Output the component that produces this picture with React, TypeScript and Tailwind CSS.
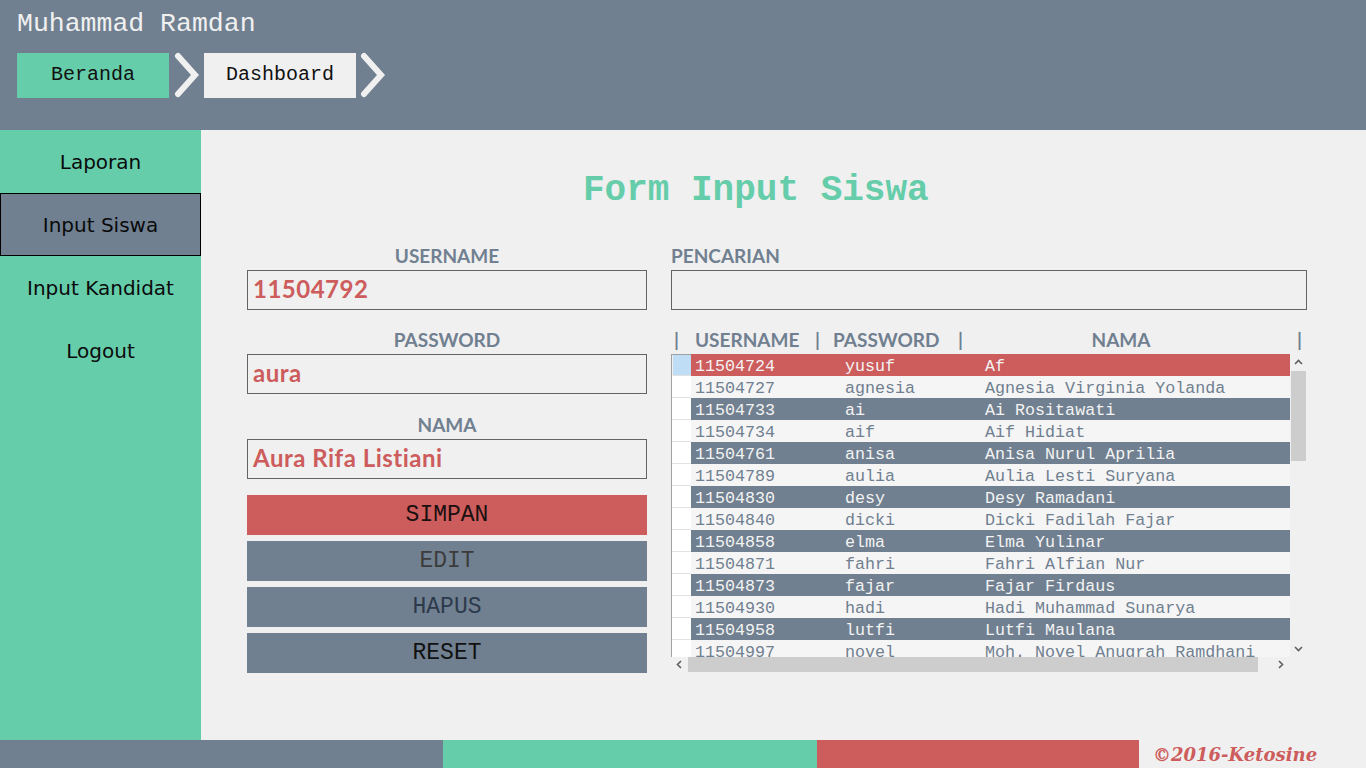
import React from "react";

const rows: [string, string, string][] = [
  ["11504724", "yusuf", "Af"],
  ["11504727", "agnesia", "Agnesia Virginia Yolanda"],
  ["11504733", "ai", "Ai Rositawati"],
  ["11504734", "aif", "Aif Hidiat"],
  ["11504761", "anisa", "Anisa Nurul Aprilia"],
  ["11504789", "aulia", "Aulia Lesti Suryana"],
  ["11504830", "desy", "Desy Ramadani"],
  ["11504840", "dicki", "Dicki Fadilah Fajar"],
  ["11504858", "elma", "Elma Yulinar"],
  ["11504871", "fahri", "Fahri Alfian Nur"],
  ["11504873", "fajar", "Fajar Firdaus"],
  ["11504930", "hadi", "Hadi Muhammad Sunarya"],
  ["11504958", "lutfi", "Lutfi Maulana"],
  ["11504997", "novel", "Moh. Novel Anugrah Ramdhani"],
];

const mono = "font-['Liberation_Mono','Courier_New',monospace]";
const lato = "font-['Lato','Noto_Sans',sans-serif]";

function Chevron() {
  return (
    <svg width="30" height="46" viewBox="0 0 30 46" className="shrink-0">
      <polyline
        points="6,4 23,23 6,42"
        fill="none"
        stroke="#f0f0f0"
        strokeWidth="6"
        strokeLinejoin="miter"
        strokeLinecap="round"
      />
    </svg>
  );
}

function SmallArrow({ dir }: { dir: "up" | "down" | "left" | "right" }) {
  const pts =
    dir === "up"
      ? "1,6 4.5,2.5 8,6"
      : dir === "down"
      ? "1,3 4.5,6.5 8,3"
      : dir === "left"
      ? "6,1 2.5,4.5 6,8"
      : "3,1 6.5,4.5 3,8";
  return (
    <svg width="9" height="9" viewBox="0 0 9 9">
      <polyline points={pts} fill="none" stroke="#606060" strokeWidth="1.6" />
    </svg>
  );
}

function Field({ label, value, mt }: { label: string; value: string; mt: string }) {
  return (
    <div className={`flex flex-col ${mt}`}>
      <div className={`h-[26px] text-center ${lato} font-bold text-[19px] leading-[24px] text-[#708090]`}>
        {label}
      </div>
      <div className="h-[40px] border border-[#646464] flex items-center pl-[5px] pb-[2px]">
        <span className={`${lato} font-bold text-[24px] leading-none tracking-[0.5px] text-[#CD5C5C]`}>{value}</span>
      </div>
    </div>
  );
}

export default function App() {
  return (
    <div className="w-[1366px] h-[768px] flex flex-col bg-[#F0F0F0] overflow-hidden">
      {/* header */}
      <div className="h-[130px] bg-[#708090] px-[17px] pt-[10px] flex flex-col">
        <div className={`${mono} text-[26.5px] leading-[28px] text-[#f0f0f0]`}>Muhammad Ramdan</div>
        <div className="mt-[14px] flex items-center">
          <div className={`w-[152px] h-[45px] bg-[#66CDAA] flex items-center justify-center ${mono} text-[20px] text-[#111]`}>
            Beranda
          </div>
          <div className="w-[35px] flex justify-center">
            <Chevron />
          </div>
          <div className={`w-[152px] h-[45px] bg-[#F0F0F0] flex items-center justify-center ${mono} text-[20px] text-[#111]`}>
            Dashboard
          </div>
          <div className="w-[34px] flex justify-center">
            <Chevron />
          </div>
        </div>
      </div>

      {/* middle */}
      <div className="h-[610px] flex">
        <div className="w-[201px] bg-[#66CDAA] flex flex-col font-['DejaVu_Sans',sans-serif] font-normal text-[20px] text-[#0a0a0a]">
          <div className="h-[63px] flex items-center justify-center">Laporan</div>
          <div className="h-[63px] flex items-center justify-center bg-[#708090] border border-black">Input Siswa</div>
          <div className="h-[63px] flex items-center justify-center">Input Kandidat</div>
          <div className="h-[63px] flex items-center justify-center">Logout</div>
        </div>

        <div className="flex-1 flex flex-col pt-[41px]">
          <div className={`pl-[382px] h-[40px] ${mono} font-bold text-[36px] leading-[40px] text-[#66CDAA]`}>
            Form Input Siswa
          </div>
          <div className="mt-[33px] pl-[46px] flex gap-[24px]">
            {/* left column */}
            <div className="w-[400px] flex flex-col">
              <Field label="USERNAME" value="11504792" mt="" />
              <Field label="PASSWORD" value="aura" mt="mt-[18px]" />
              <Field label="NAMA" value="Aura Rifa Listiani" mt="mt-[19px]" />
              <div className={`mt-[16px] flex flex-col gap-[6px] ${mono} text-[23px]`}>
                <div className="h-[40px] bg-[#CD5C5C] flex items-center justify-center text-[#1a1010]">SIMPAN</div>
                <div className="h-[40px] bg-[#708090] flex items-center justify-center text-[#3c3c3c]">EDIT</div>
                <div className="h-[40px] bg-[#708090] flex items-center justify-center text-[#2c3a4c]">HAPUS</div>
                <div className="h-[40px] bg-[#708090] flex items-center justify-center text-[#111]">RESET</div>
              </div>
            </div>

            {/* right column */}
            <div className="w-[636px] flex flex-col">
              <div className={`h-[26px] ${lato} font-bold text-[19px] leading-[24px] text-[#708090]`}>PENCARIAN</div>
              <div className="h-[40px] border border-[#646464]" />
              <div className={`mt-[18px] h-[26px] flex ${lato} font-bold text-[19px] leading-[24px] text-[#708090]`}>
                <div className="w-[20px] pl-[3px]">|</div>
                <div className="w-[124px] pl-[4px]">USERNAME</div>
                <div className="w-[18px]">|</div>
                <div className="w-[125px]">PASSWORD</div>
                <div className="w-[8px]">|</div>
                <div className="w-[331px] pr-[21px] text-center">NAMA</div>
                <div>|</div>
              </div>

              {/* grid */}
              <div className="flex flex-col h-[318px]">
                <div className="flex h-[303px]">
                  <div className="w-[619px] h-[303px] overflow-hidden flex border-l border-[#A0A0A0]">
                    <div className="w-[19px] flex flex-col border-t border-[#A0A0A0]">
                      {rows.map((_, i) => (
                        <div
                          key={i}
                          className={`${i === 0 ? "h-[21px] bg-[#BFDDF5] ml-px" : "h-[22px] bg-white"} shrink-0 border-b border-[#E2E2E2]`}
                        />
                      ))}
                    </div>
                    <div className={`flex-1 flex flex-col ${mono} text-[16.7px] leading-[25px]`}>
                      {rows.map((r, i) => {
                        const cls =
                          i === 0
                            ? "bg-[#CD5C5C] text-[#f3f3f3]"
                            : i % 2 === 1
                            ? "bg-[#F5F5F5] text-[#708090]"
                            : "bg-[#708090] text-[#f3f3f3]";
                        return (
                          <div key={i} className={`h-[22px] shrink-0 flex whitespace-nowrap overflow-hidden ${cls}`}>
                            <div className="w-[150px] pl-[4px]">{r[0]}</div>
                            <div className="w-[140px] pl-[4px]">{r[1]}</div>
                            <div className="flex-1 pl-[4px]">{r[2]}</div>
                          </div>
                        );
                      })}
                    </div>
                  </div>
                  <div className="w-[17px] flex flex-col items-center">
                    <div className="h-[17px] flex items-center justify-center">
                      <SmallArrow dir="up" />
                    </div>
                    <div className="w-[15px] h-[90px] bg-[#CDCDCD]" />
                    <div className="flex-1" />
                    <div className="h-[17px] flex items-center justify-center">
                      <SmallArrow dir="down" />
                    </div>
                  </div>
                </div>
                <div className="flex h-[15px]">
                  <div className="w-[619px] flex items-center">
                    <div className="w-[17px] flex justify-center">
                      <SmallArrow dir="left" />
                    </div>
                    <div className="w-[570px] h-[15px] bg-[#CDCDCD]" />
                    <div className="flex-1 flex justify-end pr-[5px]">
                      <SmallArrow dir="right" />
                    </div>
                  </div>
                </div>
              </div>
            </div>
          </div>
        </div>
      </div>

      {/* footer */}
      <div className="h-[28px] flex">
        <div className="w-[443px] bg-[#708090]" />
        <div className="w-[374px] bg-[#66CDAA]" />
        <div className="w-[322px] bg-[#CD5C5C]" />
        <div className="flex-1 flex items-center pl-[14px]">
          <span className="font-['DejaVu_Serif',serif] italic font-bold text-[18px] text-[#CD5C5C]">©2016-Ketosine</span>
        </div>
      </div>
    </div>
  );
}
